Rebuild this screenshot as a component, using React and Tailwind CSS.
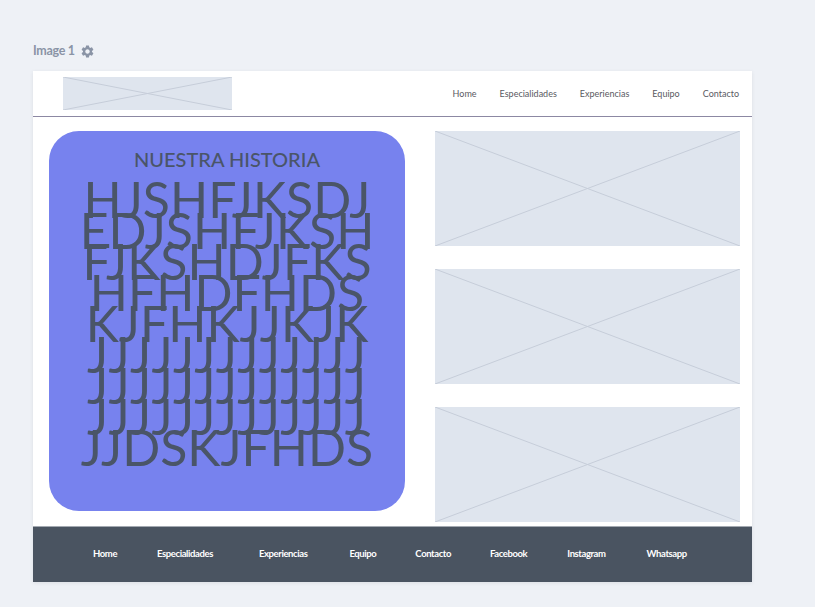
import React from 'react';

// grey box with a cross, the usual wireframe image placeholder
const Placeholder = ({ className }) => (
    <div className={`relative bg-[#dfe5ee] ${className}`}>
        <svg className="absolute inset-0 h-full w-full" preserveAspectRatio="none" viewBox="0 0 100 100">
            <line x1="0" y1="0" x2="100" y2="100" stroke="#c6cdd9" strokeWidth="1" vectorEffect="non-scaling-stroke" />
            <line x1="100" y1="0" x2="0" y2="100" stroke="#c6cdd9" strokeWidth="1" vectorEffect="non-scaling-stroke" />
        </svg>
    </div>
);

const Gear = () => (
    <svg width="15" height="15" viewBox="0 0 24 24" fill="#8a94a6">
        <path d="M19.14 12.94c.04-.3.06-.61.06-.94 0-.32-.02-.64-.07-.94l2.03-1.58a.49.49 0 0 0 .12-.61l-1.92-3.32a.49.49 0 0 0-.59-.22l-2.39.96c-.5-.38-1.030-.7-1.62-.94l-.36-2.54a.48.48 0 0 0-.48-.41h-3.840c-.24 0-.43.17-.47.41l-.36 2.54c-.59.24-1.13.57-1.62.94l-2.39-.96c-.22-.08-.47 0-.59.22L2.74 8.87c-.12.21-.08.47.12.61l2.03 1.58c-.05.3-.09.63-.09.94s.02.64.07.94l-2.03 1.58a.49.49 0 0 0-.12.61l1.92 3.32c.12.22.37.29.59.22l2.39-.96c.5.38 1.03.7 1.62.94l.36 2.54c.05.24.24.41.48.41h3.84c.24 0 .44-.17.47-.41l.36-2.54c.59-.24 1.13-.56 1.62-.94l2.39.96c.22.08.47 0 .59-.22l1.92-3.32c.12-.22.07-.47-.12-.61l-2.010-1.58zM12 15.6c-1.98 0-3.6-1.62-3.6-3.6s1.62-3.6 3.6-3.6 3.6 1.62 3.6 3.6-1.62 3.6-3.6 3.6z" />
    </svg>
);

const topLinks = ['Home', 'Especialidades', 'Experiencias', 'Equipo', 'Contacto'];

// spacing in the footer is uneven in the mockup, so each link keeps its own margin
const footerLinks = [
    { label: 'Home', cls: 'ml-0' },
    { label: 'Especialidades', cls: 'ml-[40px]' },
    { label: 'Experiencias', cls: 'ml-[46px]' },
    { label: 'Equipo', cls: 'ml-[42px]' },
    { label: 'Contacto', cls: 'ml-[39px]' },
    { label: 'Facebook', cls: 'ml-[39px]' },
    { label: 'Instagram', cls: 'ml-[40px]' },
    { label: 'Whatsapp', cls: 'ml-[41px]' },
];

const historyLines = [
    'HJSHFJKSDJ',
    'EDJSHFJKSH',
    'FJKSHDJFKS',
    'HFHDFHDS',
    'KJFHKJJKJK',
    'JJJJJJJJJJJJJ',
    'JJJJJJJJJJJJJ',
    'JJJJJJJJJJJJJ',
    'JJDSKJFHDS',
];

const App = () => {
    return (
        <div className="min-h-screen bg-[#eef1f6] pt-[44px] pl-[33px]" style={{ fontFamily: 'Lato, "Open Sans", sans-serif' }}>
            <div className="flex items-center gap-[5px] h-[14px] text-[12.5px] font-bold text-[#8a94a6] tracking-tight">
                <span>Image 1</span>
                <Gear />
            </div>

            <div className="mt-[13px] w-[719px] bg-white shadow-[0_1px_4px_rgba(0,0,0,0.08)]">
                {/* top bar */}
                <header className="flex items-center justify-between h-[46px] pl-[30px] pr-[13px] border-b border-[#8c88a3]">
                    <Placeholder className="w-[169px] h-[33px]" />
                    <nav className="flex gap-[23px] text-[9px] text-[#5a5a62]">
                        {topLinks.map(link => (
                            <span key={link}>{link}</span>
                        ))}
                    </nav>
                </header>

                {/* body */}
                <main className="flex pt-[14px] pl-[16px] pr-[12px] pb-[4px]">
                    <section className="w-[356px] h-[380px] rounded-[30px] bg-[#7782ee] text-[#4a5568] text-center pt-[16px]">
                        <h2 className="text-[20px] leading-[24px] font-medium">NUESTRA HISTORIA</h2>
                        <div className="mt-[13px] text-[50px] leading-[31px]">
                            {historyLines.map((line, i) => (
                                <div key={i} className={line.startsWith('JJJJ') ? 'tracking-[1.2px]' : ''}>{line}</div>
                            ))}
                        </div>
                    </section>

                    <div className="ml-[30px] flex-1 flex flex-col gap-[23px]">
                        <Placeholder className="h-[115px]" />
                        <Placeholder className="h-[115px]" />
                        <Placeholder className="h-[115px]" />
                    </div>
                </main>

                {/* footer */}
                <footer className="h-[56px] bg-[#4a5461] border-t border-[#a3a9b1] flex items-center pl-[60px] text-[9.5px] font-bold text-white tracking-[-0.4px]">
                    {footerLinks.map(link => (
                        <span key={link.label} className={link.cls}>{link.label}</span>
                    ))}
                </footer>
            </div>
        </div>
    );
};

export default App;
